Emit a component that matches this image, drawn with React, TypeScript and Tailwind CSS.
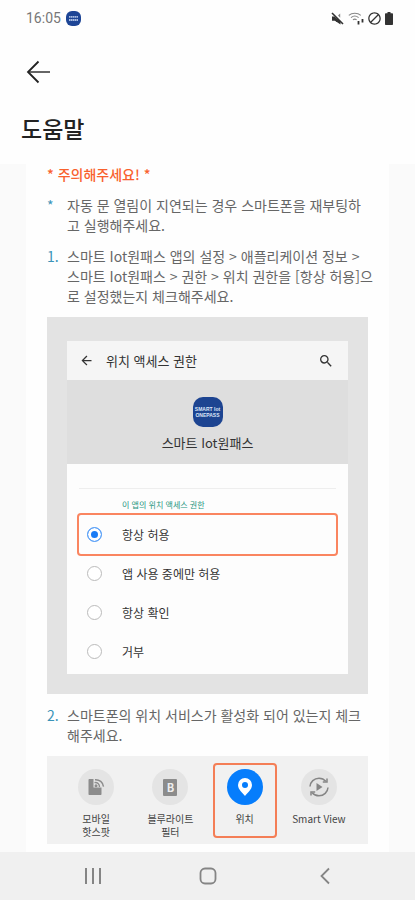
import { MdArrowBack, MdBlock, MdSearch } from "react-icons/md";

const options = ["항상 허용", "앱 사용 중에만 허용", "항상 확인", "거부"];

function StatusBar() {
  return (
    <div className="flex h-9 items-center justify-between pl-[26px] pr-[22px]">
      <div className="flex items-center gap-[5px]">
        <span className="font-[Roboto] text-sm text-[#777]">16:05</span>
        <svg width="15" height="15" viewBox="0 0 15 15">
          <rect width="15" height="15" rx="6" fill="#1d4596" />
          <path d="M3 5.8h9M3 9h9" stroke="#a9bde2" strokeWidth="1.8" strokeDasharray="1.6 .4" />
        </svg>
      </div>
      <div className="flex items-center text-[#333]">
        <svg width="13" height="13" viewBox="0 0 13 13" className="mr-1">
          <path d="M1 4.500v4.300h3L9.500 12.600V9z" fill="currentColor" />
          <path d="M1 4.500h2.500L6 6.800 9 9.500 5.500 10z" fill="currentColor" />
          <path d="M7 3.600 9.200 1.500v4.300z" fill="currentColor" opacity=".6" />
          <path d="M1 1l11 11" stroke="currentColor" strokeWidth="1.600" />
        </svg>
        <svg width="16" height="13" viewBox="0 0 16 13" className="mr-[3px]" fill="none">
          <path d="M.8 3.400C4 .6 9.600 .6 12.800 3.400M3 5.600c2.200-1.900 5.400-1.900 7.600 0M5 7.800c1.100-.9 2.500-.9 3.600 0" stroke="#888" strokeWidth="1.100" />
          <path d="M10.500 12.500V9M14.500 7v3.500" stroke="#333" strokeWidth="1.800" />
        </svg>
        <MdBlock size={15} className="mr-[3px]" />
        <svg width="8" height="13" viewBox="0 0 8 13" fill="currentColor">
          <path d="M2.500 0h3v1.300H7c.6 0 1 .4 1 1V12c0 .6-.4 1-1 1H1c-.6 0-1-.4-1-1V2.300c0-.6.4-1 1-1h1.500z" />
        </svg>
      </div>
    </div>
  );
}

function PermissionPanel() {
  return (
    <div className="mt-[11px] bg-[#e3e3e3] px-5 pt-6 pb-5">
      <div className="bg-[#fdfdfd] text-[#333]">
        <div className="flex h-[39px] items-center bg-[#f5f5f5] px-3">
          <button type="button" aria-label="뒤로">
            <MdArrowBack size={15} />
          </button>
          <span className="ml-3 flex-1 text-[13px]">위치 액세스 권한</span>
          <button type="button" aria-label="검색" className="mr-[2px]">
            <MdSearch size={16} />
          </button>
        </div>
        <div className="flex h-[84px] flex-col items-center bg-[#dedede] pt-[17px]">
          <div className="flex h-[30px] w-[30px] flex-col items-center justify-center rounded-[10px] bg-[#1d4491] font-['Liberation_Sans',sans-serif] text-[5px] leading-[6px] font-bold text-[#dce5f7]">
            <span>SMART Iot</span>
            <span>ONEPASS</span>
          </div>
          <p className="mt-[6px] text-[13px] leading-5">스마트 Iot원패스</p>
        </div>
        <div role="radiogroup" aria-labelledby="permission-title" className="px-3 pt-6 pb-[3px]">
          <div
            id="permission-title"
            className="border-t border-[#eee] pt-2 pb-[2px] pl-[43px] text-[8px] leading-4 text-[#25967f]"
          >
            이 앱의 위치 액세스 권한
          </div>
          {options.map((option, i) => (
            <label
              key={option}
              className={
                i === 0
                  ? "flex h-[39px] items-center gap-5 rounded-xs pl-2 text-xs ring-2 ring-[#fa8560]"
                  : "flex h-[39px] items-center gap-5 pl-2 text-xs"
              }
            >
              <input
                type="radio"
                name="permission"
                defaultChecked={i === 0}
                className="h-[15px] w-[15px] appearance-none rounded-full border border-[#bbb] bg-white checked:border-[#5ba1f7] checked:bg-[#1a7cf5] checked:shadow-[inset_0_0_0_3px_white]"
              />
              {option}
            </label>
          ))}
        </div>
      </div>
    </div>
  );
}

function HotspotIcon() {
  return (
    <svg width="18" height="18" viewBox="0 0 18 18" fill="none">
      <path d="M2.500 1h4v8.500h8V16c0 .6-.4 1-1 1h-11c-.6 0-1-.4-1-1V2c0-.6.4-1 1-1z" fill="#8c8c8c" />
      <path d="M7.500 4.600c3-.4 5 1.400 5 4.300M8 1.700c4.500-.3 8 2.500 8.500 7" stroke="#8c8c8c" strokeWidth="1.400" />
      <circle cx="9" cy="7.800" r="1.500" fill="#8c8c8c" />
    </svg>
  );
}

function SmartViewIcon() {
  return (
    <svg width="20" height="20" viewBox="0 0 20 20" fill="none" stroke="#858585" strokeWidth="1.500">
      <path d="M1 9.500C1.300 5 5.100 1.200 10 1.200c2.800 0 5.200 1.200 6.800 3.100M19 10.500c-.3 4.500-4.100 8.300-9 8.300-2.800 0-5.200-1.200-6.800-3.100" />
      <path d="M18 1.500v3.600h-4.200M2 18.500v-3.600h4.200" />
      <path d="M7.500 6v8l6-4z" fill="#858585" stroke="none" />
    </svg>
  );
}

function QuickSettings() {
  return (
    <div className="mt-[11px] grid h-[88px] grid-cols-4 bg-[#f1f1f1] px-3 py-[7px] text-center text-[10px] leading-[13px] text-[#444]">
      <button type="button" className="flex flex-col items-center pt-[6px]">
        <span className="mb-[7px] flex h-9 w-9 items-center justify-center rounded-full bg-[#e4e4e4]">
          <HotspotIcon />
        </span>
        <span>
          모바일
          <br />
          핫스팟
        </span>
      </button>
      <button type="button" className="flex flex-col items-center pt-[6px]">
        <span className="mb-[7px] flex h-9 w-9 items-center justify-center rounded-full bg-[#e4e4e4]">
          <span className="flex h-[17px] w-[14px] items-center justify-center rounded-[1px] bg-[#8c8c8c] text-[11px] font-bold text-[#eee]">
            B
          </span>
        </span>
        <span>
          블루라이트
          <br />
          필터
        </span>
      </button>
      <button
        type="button"
        className="mx-[5px] flex flex-col items-center rounded-sm border-2 border-[#f47e56] pt-1"
      >
        <span className="mb-[7px] flex h-9 w-9 items-center justify-center rounded-full bg-[#067dfc]">
          <svg width="14" height="18" viewBox="0 0 14 18">
            <path
              d="M7 0a7 7 0 0 0-7 7c0 4.500 4.500 7.500 7 11 2.500-3.500 7-6.500 7-11a7 7 0 0 0-7-7zm0 4a3 3 0 1 1 0 6 3 3 0 0 1 0-6z"
              fill="white"
            />
          </svg>
        </span>
        <span>위치</span>
      </button>
      <button type="button" className="flex flex-col items-center pt-[6px] whitespace-nowrap">
        <span className="mb-[7px] flex h-9 w-9 items-center justify-center rounded-full bg-[#e4e4e4]">
          <SmartViewIcon />
        </span>
        <span>Smart View</span>
      </button>
    </div>
  );
}

function NavBar() {
  return (
    <nav className="grid h-12 grid-cols-3 place-items-center bg-[#f0f0f0] px-[35px] text-[#858585]">
      <button type="button" aria-label="최근 앱">
        <svg width="18" height="18" viewBox="0 0 18 18" stroke="currentColor" strokeWidth="2">
          <path d="M2 1v16M9 1v16M16 1v16" />
        </svg>
      </button>
      <button type="button" aria-label="홈">
        <svg width="18" height="18" viewBox="0 0 18 18" fill="none" stroke="currentColor" strokeWidth="1.800">
          <rect x="1.500" y="1.500" width="15" height="15" rx="4.500" />
        </svg>
      </button>
      <button type="button" aria-label="뒤로 가기" className="pl-1">
        <svg width="10" height="18" viewBox="0 0 10 18" fill="none" stroke="currentColor" strokeWidth="1.800">
          <path d="M9 1.500 1.500 9 9 16.500" />
        </svg>
      </button>
    </nav>
  );
}

export default function App() {
  return (
    <div
      lang="ko"
      className="flex min-h-screen flex-col bg-[#fefefe] font-['Noto_Sans_CJK_KR','Noto_Sans',sans-serif]"
    >
      <header className="h-[164px]">
        <StatusBar />
        <button type="button" aria-label="뒤로" className="mt-6 ml-[26px] block">
          <svg width="24" height="24" viewBox="0 0 24 24" fill="none" strokeWidth="1.800">
            <path d="M2 12H24" stroke="#555" />
            <path d="M12.500 1.500 2 12 12.500 22.500" stroke="#222" />
          </svg>
        </button>
        <h1 className="mt-7 ml-[21px] text-[23px] leading-8 font-medium text-[#222]">도움말</h1>
      </header>

      <main className="flex-1 bg-[#fafafa] px-[26px]">
        <div className="h-full bg-[#fefefe] px-[21px] pb-2 text-sm leading-5 text-[#666]">
          <p className="font-medium text-[#f9612d]">* 주의해주세요! *</p>
          <div className="mt-[11px] flex">
            <span className="w-5 shrink-0 text-[#3a93b8]">*</span>
            <p className="whitespace-nowrap">
              자동 문 열림이 지연되는 경우 스마트폰을 재부팅하
              <br />고 실행해주세요.
            </p>
          </div>
          <div className="mt-[11px] flex">
            <span className="w-5 shrink-0 text-[#3a93b8]">1.</span>
            <p className="whitespace-nowrap">
              스마트 Iot원패스 앱의 설정 &gt; 애플리케이션 정보 &gt;
              <br />
              스마트 Iot원패스 &gt; 권한 &gt; 위치 권한을 [항상 허용]으
              <br />로 설정했는지 체크해주세요.
            </p>
          </div>
          <PermissionPanel />
          <div className="mt-[11px] flex">
            <span className="w-5 shrink-0 text-[#3a93b8]">2.</span>
            <p className="whitespace-nowrap">
              스마트폰의 위치 서비스가 활성화 되어 있는지 체크
              <br />
              해주세요.
            </p>
          </div>
          <QuickSettings />
        </div>
      </main>

      <NavBar />
    </div>
  );
}
